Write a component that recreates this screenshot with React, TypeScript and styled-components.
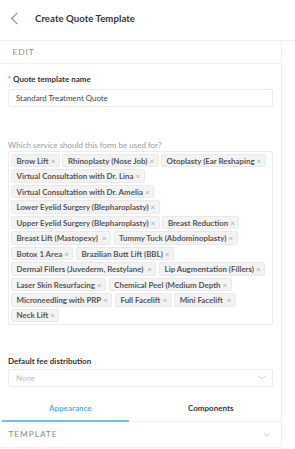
import React from "react";
import styled, { createGlobalStyle, css } from "styled-components";

const Global = createGlobalStyle`
  html, body { margin: 0; padding: 0; background: #fff; }
  body { font-family: Lato, "Noto Sans", sans-serif; color: #333; -webkit-font-smoothing: antialiased; }
  * { box-sizing: border-box; }
`;

const Page = styled.div`
  width: 295px;
  height: 449px;
  overflow: hidden;
  display: flex;
  flex-direction: column;
`;

const Header = styled.header`
  height: 41px;
  flex: none;
  display: flex;
  align-items: center;
  border-bottom: 1px solid #efefef;
  padding: 0 0 4px 9px;
  gap: 16px;
`;

const BackButton = styled.button`
  border: 0;
  background: none;
  padding: 0;
  width: 10px;
  height: 14px;
  display: flex;
  align-items: center;
  justify-content: center;
  cursor: pointer;
  margin-top: 1px;
`;

const Title = styled.h1`
  margin: 0;
  font-size: 9.6px;
  font-weight: 700;
  color: #333;
  letter-spacing: 0.05px;
`;

const Body = styled.div`
  flex: 1;
  display: flex;
`;

const Panel = styled.div`
  width: 282px;
  border-right: 1px solid #f0f0f0;
  display: flex;
  flex-direction: column;
`;

const SectionHeader = styled.div<{ $indent: number; $height: number }>`
  height: ${(p) => p.$height}px;
  display: flex;
  align-items: center;
  justify-content: space-between;
  padding-left: ${(p) => p.$indent}px;
  padding-right: 10px;
  border-bottom: 1px solid #efefef;
  font-size: 8.4px;
  font-weight: 400;
  letter-spacing: 0.9px;
  text-transform: uppercase;
  color: #8a8a8a;
`;

const Form = styled.div`
  padding: 0 8px;
  display: flex;
  flex-direction: column;
`;

const Label = styled.div<{ $muted?: boolean; $top: number }>`
  margin-top: ${(p) => p.$top}px;
  font-size: 8px;
  line-height: 10px;
  ${(p) =>
    p.$muted
      ? css`
          color: #9a9a9a;
          font-weight: 400;
        `
      : css`
          color: #333;
          font-weight: 700;
        `}
`;

const Required = styled.span`
  color: #f0524f;
  margin-right: 2px;
  font-size: 7px;
`;

const TextInput = styled.div`
  margin-top: 5px;
  height: 18px;
  border: 1px solid #ececec;
  border-radius: 2px;
  padding-left: 7px;
  display: flex;
  align-items: center;
  font-size: 7.9px;
  color: #444;
`;

const TagBox = styled.div`
  margin-top: 1px;
  border: 1px solid #ececec;
  border-radius: 2px;
  padding: 2px 2px 1.5px 2px;
  display: flex;
  flex-wrap: wrap;
  column-gap: 2.6px;
  row-gap: 2.2px;
`;

const Tag = styled.span`
  height: 13.3px;
  display: inline-flex;
  align-items: center;
  padding: 0 3.5px 0 4.5px;
  background: #f3f3f3;
  border: 1px solid #e9e9e9;
  border-radius: 2px;
  font-size: 7.9px;
  font-weight: 700;
  color: #555;
  white-space: pre;
`;

const TagClose = styled.span`
  margin-left: 2px;
  font-size: 8px;
  font-weight: 400;
  color: #a6a6a6;
`;

const Select = styled.div`
  margin-top: 3px;
  height: 18px;
  border: 1px solid #ececec;
  border-radius: 2px;
  padding: 0 6px 0 7px;
  display: flex;
  align-items: center;
  justify-content: space-between;
  font-size: 7.9px;
  color: #bdbdbd;
`;

const Tabs = styled.div`
  margin-top: 8px;
  display: flex;
  border-bottom: 1px solid #efefef;
`;

const Tab = styled.div<{ $active?: boolean }>`
  flex: 1;
  height: 26px;
  display: flex;
  align-items: center;
  justify-content: center;
  font-size: 8px;
  font-weight: 700;
  position: relative;
  color: ${(p) => (p.$active ? "#4fb4dc" : "#333")};
  ${(p) =>
    p.$active &&
    css`
      &::after {
        content: "";
        position: absolute;
        left: 2px;
        right: 12px;
        bottom: -1px;
        height: 2px;
        background: #6cc2e2;
      }
    `}
`;

const Chevron = ({ size = 8 }: { size?: number }) => (
  <svg width={size} height={size * 0.6} viewBox="0 0 10 6" fill="none">
    <path d="M1 1l4 4 4-4" stroke="#c4c4c4" strokeWidth="1" />
  </svg>
);

const services = [
  "Brow Lift",
  "Rhinoplasty (Nose Job)",
  "Otoplasty (Ear Reshaping",
  "Virtual Consultation with Dr. Lina",
  "Virtual Consultation with Dr. Amelia",
  "Lower Eyelid Surgery (Blepharoplasty)",
  "Upper Eyelid Surgery (Blepharoplasty)",
  "Breast Reduction",
  "Breast Lift (Mastopexy) ",
  "Tummy Tuck (Abdominoplasty)",
  "Botox 1 Area",
  "Brazilian Butt Lift (BBL)",
  "Dermal Fillers (Juvederm, Restylane) ",
  "Lip Augmentation (Fillers)",
  "Laser Skin Resurfacing",
  "Chemical Peel (Medium Depth",
  "Microneedling with PRP",
  "Full Facelift",
  "Mini Facelift ",
  "Neck Lift",
];

export default function App() {
  return (
    <Page>
      <Global />
      <Header>
        <BackButton aria-label="Back">
          <svg width="9" height="13" viewBox="0 0 9 13" fill="none">
            <path d="M7.5 0.8L1.6 6.5l5.9 5.7" stroke="#8c8c8c" strokeWidth="1.1" />
          </svg>
        </BackButton>
        <Title>Create Quote Template</Title>
      </Header>
      <Body>
        <Panel>
          <SectionHeader $indent={12.5} $height={23}>EDIT</SectionHeader>
          <Form>
            <Label $top={10}>
              <Required>*</Required>Quote template name
            </Label>
            <TextInput>Standard Treatment Quote</TextInput>
            <Label $muted $top={33}>Which service should this form be used for?</Label>
            <TagBox>
              {services.map((s) => (
                <Tag key={s}>
                  {s}
                  <TagClose>×</TagClose>
                </Tag>
              ))}
            </TagBox>
            <Label $top={31}>Default fee distribution</Label>
            <Select>
              None
              <Chevron />
            </Select>
          </Form>
          <Tabs>
            <Tab $active>Appearance</Tab>
            <Tab>Components</Tab>
          </Tabs>
          <SectionHeader $indent={8.5} $height={26}>
            TEMPLATE
            <Chevron />
          </SectionHeader>
        </Panel>
      </Body>
    </Page>
  );
}
